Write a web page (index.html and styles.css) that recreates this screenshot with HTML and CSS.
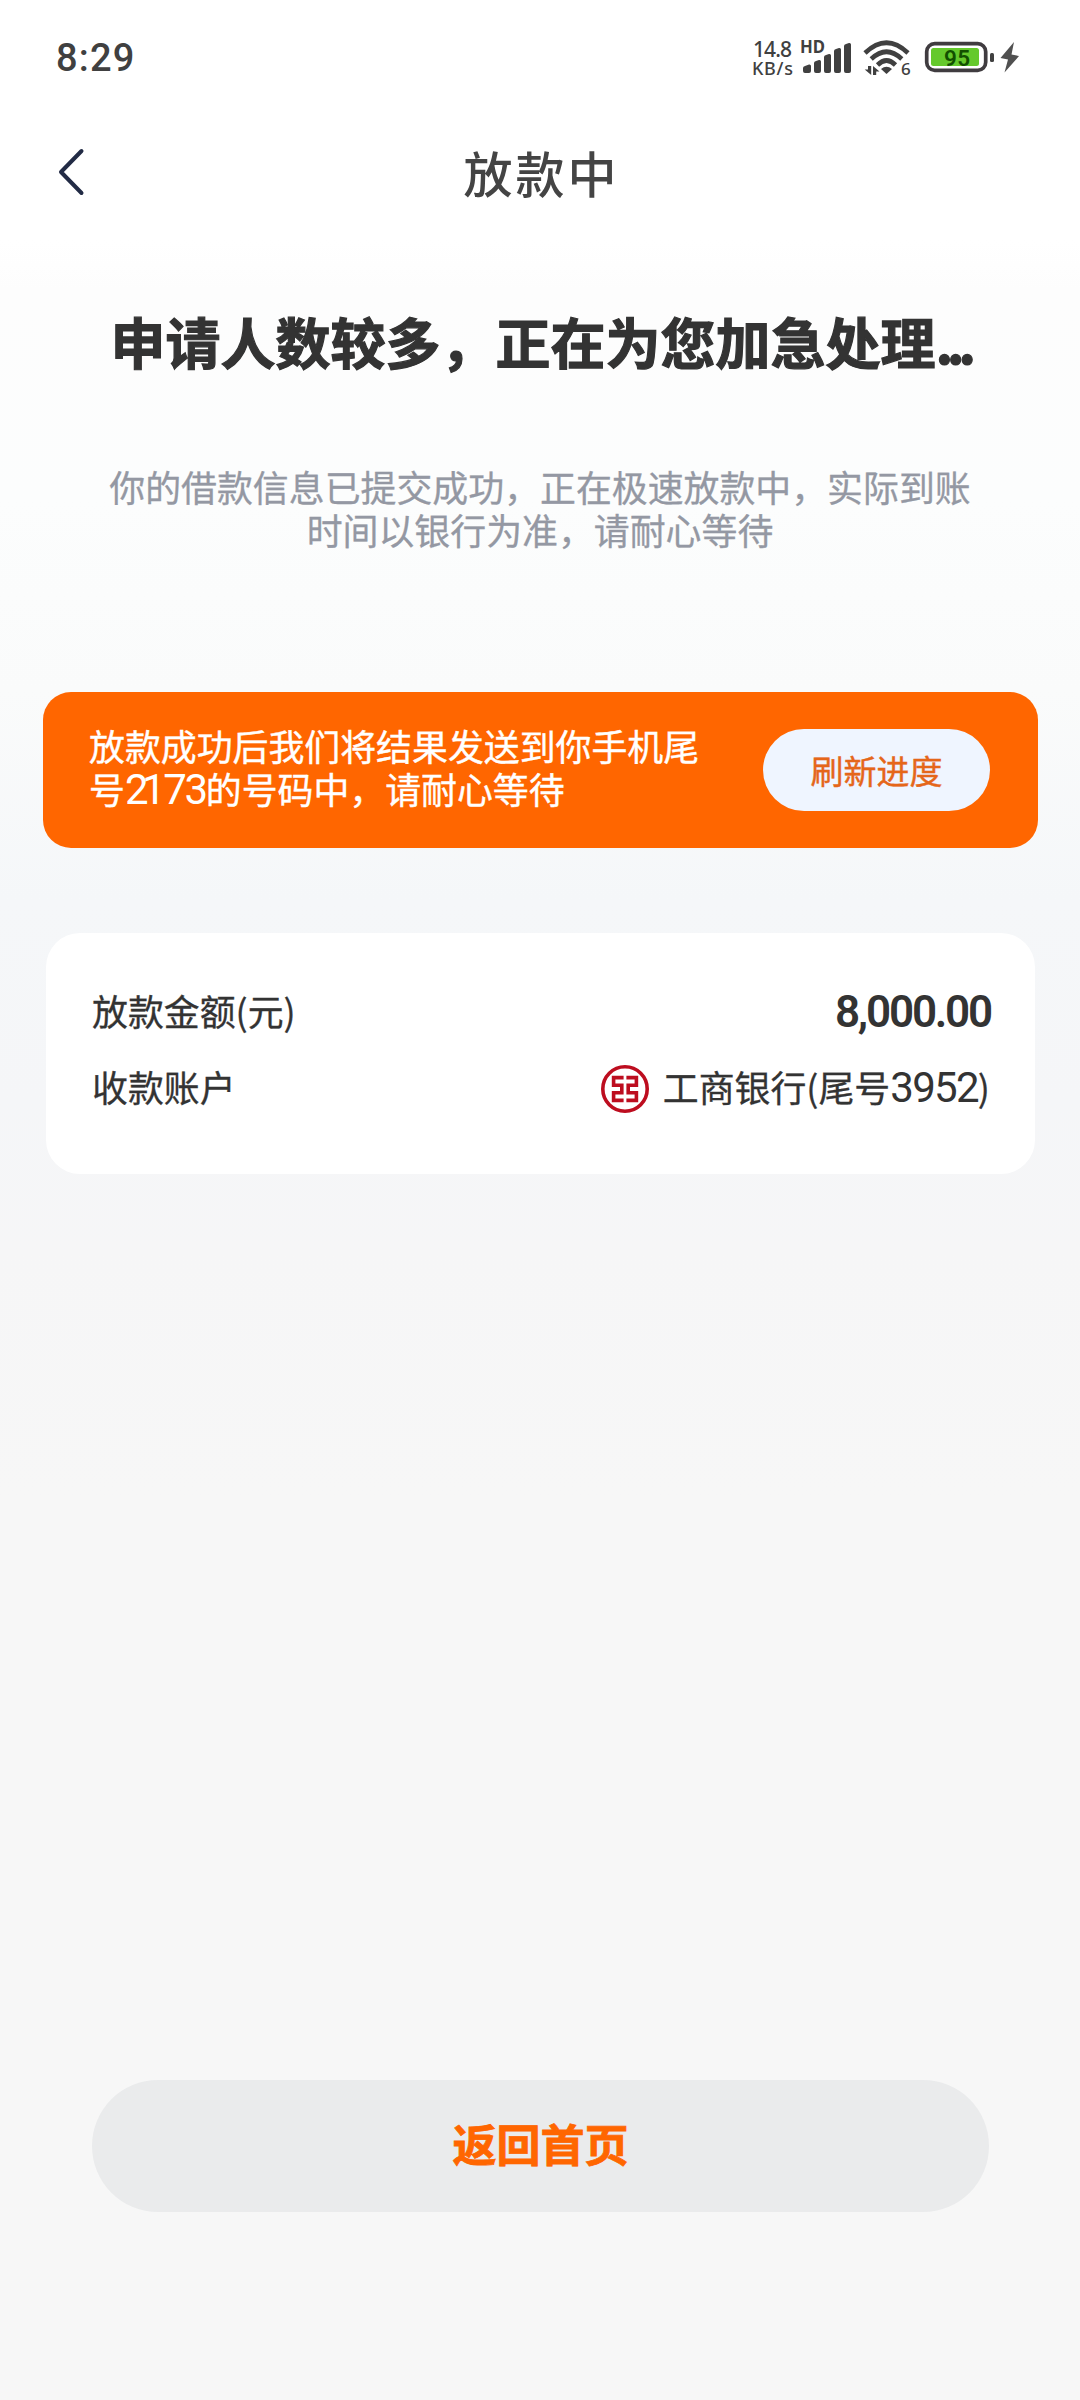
FILE: index.html
```html
<!DOCTYPE html>
<html lang="zh-CN">
<head>
<meta charset="utf-8">
<meta name="viewport" content="width=device-width">
<title>放款中</title>
<link rel="stylesheet" href="styles.css">
</head>
<body>
<div class="screen">
  <header class="status">
    <span class="time">8:29</span>
    <svg class="indicators" viewBox="740 20 300 80" width="300" height="80">
      <g class="status-text">
        <text x="753" y="57" font-size="21" textLength="39">14.8</text>
        <text x="752" y="75" font-size="18" textLength="41">KB/s</text>
        <text x="800" y="53" font-size="17" font-weight="700" textLength="25" lengthAdjust="spacingAndGlyphs">HD</text>
        <text x="901" y="75" font-size="17" textLength="9">6</text>
      </g>
      <g fill="#404040">
        <path d="M803 68 q0-1.500 2-2 l4-1.500 q2-.3 2 1.500 v5 q0 2-2 2 h-4 q-2 0-2-2z"/>
        <path d="M814 63 q0-1.500 2-2 l3-1 q2-.3 2 1.500 v9.500 q0 2-2 2 h-3 q-2 0-2-2z"/>
        <path d="M824 57 q0-1.500 2-2 l3-1 q2-.3 2 1.500 v15.500 q0 2-2 2 h-3 q-2 0-2-2z"/>
        <path d="M834 51 q0-1.500 2-2 l3-1 q2-.3 2 1.500 v21.500 q0 2-2 2 h-3 q-2 0-2-2z"/>
        <path d="M844 46 q0-1.500 2-2 l3-1 q2-.3 2 1.500 v26.500 q0 2-2 2 h-3 q-2 0-2-2z"/>
        <path d="M886.500 74 l-5.500-5 q5.500-4.500 11 0z"/>
        <path d="M868 66 h3.200 v9 l-6.500-5.500 h3.300z M873 75 v-9 l6.500 5.500 h-3.300 v3.500z"/>
      </g>
      <g fill="none" stroke="#404040" stroke-width="4.600">
        <path d="M865 53 Q886.500 32.500 908 53"/>
        <path d="M871.200 59 Q886.500 44.500 901.800 59"/>
        <path d="M877.500 65 Q886.500 56 895.500 65"/>
      </g>
      <rect x="926.700" y="43.700" width="59" height="26.600" rx="8" fill="#fff" stroke="#403c40" stroke-width="3.700"/>
      <rect x="931" y="48" width="48" height="18" rx="2.500" fill="#65c92c"/>
      <rect x="990" y="53" width="4" height="9" rx="1.500" fill="#404040"/>
      <text class="battery" x="944" y="65.500" font-size="22.500" textLength="26">95</text>
      <path d="M1014 42 L1000.500 58 L1008 59.500 L1004.500 72.500 L1019 56 L1011.500 54.500z" fill="#505050"/>
    </svg>
  </header>

  <nav class="navbar">
    <svg class="back" viewBox="0 0 30 50" width="30" height="50"><path d="M25.500 4 L5 25 L25.500 46" fill="none" stroke="#222b45" stroke-width="4" stroke-linecap="round" stroke-linejoin="round"/></svg>
    <h1 class="nav-title">放款中</h1>
  </nav>

  <main class="content">
    <h2 class="headline">申请人数较多，正在为您加急处理<span class="dots">...</span></h2>
    <p class="summary">你的借款信息已提交成功，正在极速放款中，实际到账<br>时间以银行为准，请耐心等待</p>

    <section class="banner">
      <p class="banner-text">放款成功后我们将结果发送到你手机尾<br>号<span class="num phone">2<span class="one">1</span>73</span>的号码中，请耐心等待</p>
      <button class="refresh">刷新进度</button>
    </section>

    <section class="card">
      <div class="row"><span>放款金额(元)</span><span class="amount">8,000.00</span></div>
      <div class="row">
        <span>收款账户</span>
        <span class="bank">
          <svg class="bank-logo" viewBox="0 0 48 48" width="48" height="48">
            <circle cx="24" cy="24" r="22.200" fill="none" stroke="#bd0d1f" stroke-width="3.600"/>
            <g fill="none" stroke="#bd0d1f" stroke-width="3.600">
              <path d="M22.600 12.600 H12.600 V20.200 H20.800 V27.800 H12.600 V35.400 H22.600"/>
              <path d="M25.400 12.600 H35.400 V20.200 H27.200 V27.800 H35.400 V35.400 H25.400"/>
            </g>
          </svg>
          <span>工商银行(尾号<span class="num">3952</span>)</span>
        </span>
      </div>
    </section>
  </main>

  <footer class="footer"><button class="home">返回首页</button></footer>
</div>
</body>
</html>
```
FILE: styles.css
```css
* { box-sizing: border-box; margin: 0; padding: 0; }
body { font-family: "Noto Sans CJK SC", sans-serif; color: #333; }
button { border: 0; font-family: inherit; }
.screen {
  width: 1080px; height: 2400px; display: flex; flex-direction: column;
  background: linear-gradient(#fff 0, #fff 240px, #fdfdfd 290px, #fcfdfd 500px, #fafbfb 690px, #f5f7f9 900px, #f5f6f8 1100px, #f6f6f7 1250px, #f7f7f7 1500px);
}
.status { height: 120px; padding: 20px 40px 0 56px; display: flex; justify-content: space-between; align-items: flex-start; }
.time { font: 500 38px/76px Roboto, sans-serif; letter-spacing: 1.2px; color: #404040; }
.status-text { font-family: "Noto Sans", sans-serif; fill: #404040; font-weight: 500; }
.battery { font-family: Roboto, sans-serif; font-weight: 600; fill: #125000; }
.navbar { height: 110px; display: grid; grid-template-columns: 120px 1fr 120px; align-items: center; }
.back { margin-left: 56px; margin-top: -6px; }
.nav-title { margin-top: -6px; padding-left: 3px; text-align: center; font-size: 49px; font-weight: 500; letter-spacing: 3px; line-height: 70px; color: #444; }
.content { display: flex; flex-direction: column; }
.headline { margin-top: 70px; line-height: 80px; font-size: 55px; font-weight: 700; text-align: center; white-space: nowrap; -webkit-text-stroke: 1.200px #333; }
.dots { letter-spacing: -6.500px; }
.summary { margin-top: 85px; font-size: 35.900px; line-height: 43px; text-align: center; color: #9498a3; -webkit-text-stroke: .3px #9498a3; }
.banner {
  margin: 141px 42px 0 43px; height: 156px; border-radius: 28px; background: #f60; color: #fff;
  display: flex; justify-content: space-between; align-items: center; padding: 0 48px 0 46px;
}
.banner-text { margin-top: -6px; font-size: 35.900px; line-height: 43px; white-space: nowrap; -webkit-text-stroke: .4px #fff; }
.num { font-family: Roboto, sans-serif; font-size: 42px; line-height: 1; letter-spacing: -1.700px; -webkit-text-stroke: 0; }
.phone { letter-spacing: -2.400px; }
.one { margin-left: -4px; }
.refresh { width: 227px; height: 82px; border-radius: 41px; background: #eff5ff; color: #e5661a; font-size: 33px; -webkit-text-stroke: .4px #e5661a; }
.card { margin: 85px 45px 0 46px; height: 241px; border-radius: 34px; background: #fff; padding: 39px 45px 0 46px; }
.row { height: 76px; display: flex; justify-content: space-between; align-items: center; font-size: 35.900px; -webkit-text-stroke: .3px #333; }
.amount { margin-top: 3px; margin-right: -1px; font: 600 44px/1 Roboto, sans-serif; letter-spacing: -2.200px; -webkit-text-stroke: 0; }
.bank { display: flex; align-items: center; gap: 14px; line-height: 50px; }
.bank-logo { margin-top: 5px; }
.footer { margin-top: auto; padding: 0 91px 188px 92px; }
.home { display: block; width: 100%; height: 132px; padding-bottom: 6px; border-radius: 66px; background: #eaebec; color: #f60; font-size: 44px; font-weight: 700; -webkit-text-stroke: .8px #f60; }
```
